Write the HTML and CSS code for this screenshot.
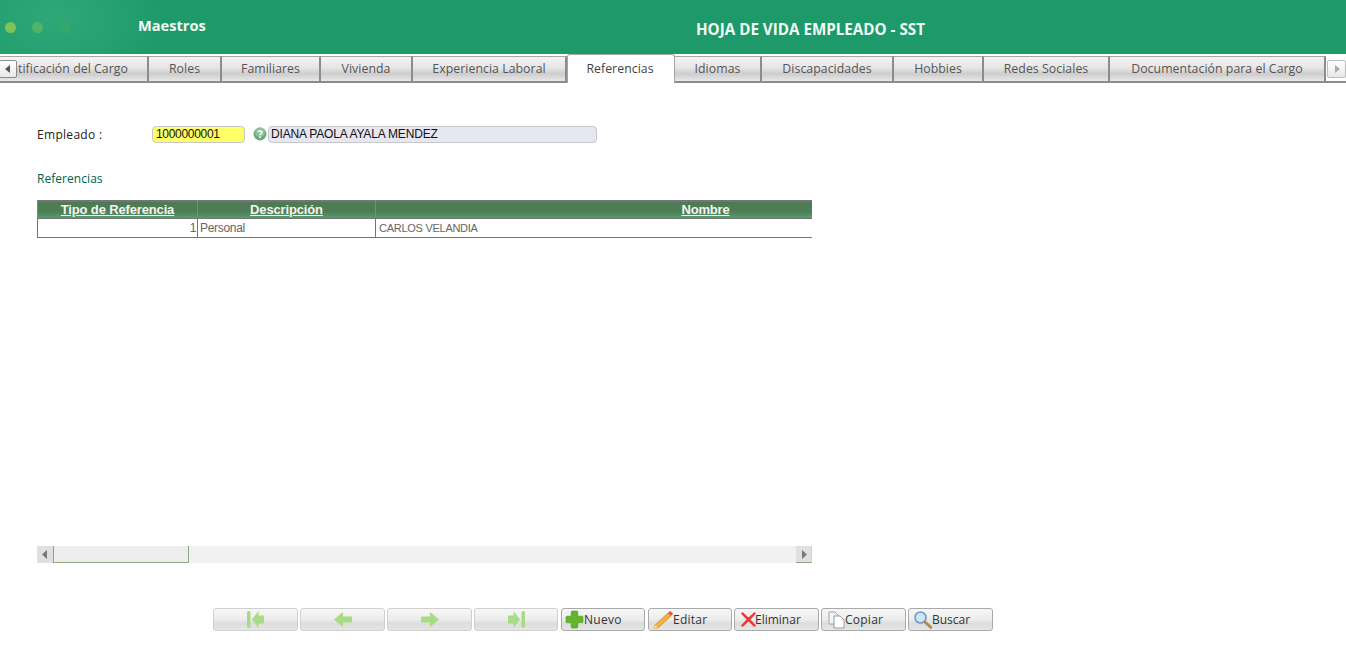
FILE: index.html
```html
<!DOCTYPE html>
<html lang="es">
<head>
<meta charset="utf-8">
<title>Hoja de vida empleado</title>
<link rel="stylesheet" href="styles.css">
</head>
<body>
<header class="topbar">
  <div class="brand">
    <span class="dots"><i class="dot d1"></i><i class="dot d2"></i><i class="dot d3"></i></span>
    <span class="brand-name">Maestros</span>
  </div>
  <h1 class="page-title">HOJA DE VIDA EMPLEADO - SST</h1>
</header>
<nav class="tabs">
  <button class="tab-scroll left"><svg width="6" height="8" viewBox="0 0 6 8"><path d="M5 0v8L0 4z" fill="#555"/></svg></button>
  <a class="tab first"><span>Identificación del Cargo</span></a>
  <a class="tab">Roles</a>
  <a class="tab">Familiares</a>
  <a class="tab">Vivienda</a>
  <a class="tab">Experiencia Laboral</a>
  <a class="tab active">Referencias</a>
  <a class="tab">Idiomas</a>
  <a class="tab">Discapacidades</a>
  <a class="tab">Hobbies</a>
  <a class="tab">Redes Sociales</a>
  <a class="tab">Documentación para el Cargo</a>
  <span class="tab-end"><button class="tab-scroll right"><svg width="6" height="8" viewBox="0 0 6 8"><path d="M1 0v8l5-4z" fill="#aaa"/></svg></button></span>
</nav>
<main class="content">
  <div class="field-row">
    <label class="field-label">Empleado :</label>
    <input class="code-input" value="1000000001">
    <svg class="help" width="14" height="14" viewBox="0 0 14 14"><circle cx="7" cy="7" r="6.5" fill="#6fa77f"/><circle cx="7" cy="5" r="5" fill="#a6cfae" opacity=".6"/><path d="M5 5.200C5 3.600 9 3.400 9 5.300 9 6.600 7 6.600 7 8.200" fill="none" stroke="#fff" stroke-width="1.500"/><rect x="6.200" y="9.300" width="1.600" height="1.600" fill="#fff"/></svg>
    <input class="name-input" value="DIANA PAOLA AYALA MENDEZ" readonly>
  </div>
  <h2 class="section-title">Referencias</h2>
  <div class="grid-wrap">
    <div class="grid-clip">
      <table class="grid">
        <thead>
          <tr><th class="c1">Tipo de Referencia</th><th class="c2">Descripción</th><th class="c3">Nombre</th></tr>
        </thead>
        <tbody>
          <tr><td class="num">1</td><td>Personal</td><td class="name">CARLOS VELANDIA</td></tr>
        </tbody>
      </table>
    </div>
    <div class="hscroll">
      <span class="hs-btn"><svg width="6" height="9" viewBox="0 0 6 9"><path d="M5 0v9L0 4.500z" fill="#777"/></svg></span>
      <span class="hs-thumb"></span>
      <span class="hs-track"></span>
      <span class="hs-btn end"><svg width="6" height="9" viewBox="0 0 6 9"><path d="M1 0v9l5-4.500z" fill="#777"/></svg></span>
    </div>
  </div>
  <div class="toolbar">
    <button class="btn"><svg width="17" height="17" viewBox="0 0 17 17"><rect x="0" y="0" width="3.500" height="17" rx="1.500" fill="#a5dc84"/><path d="M11.500 0v17L5 8.500z" fill="#a5dc84"/><rect x="10" y="4.500" width="7" height="8" rx="1" fill="#a5dc84"/></svg></button>
    <button class="btn"><svg width="18" height="15" viewBox="0 0 18 15"><path d="M0 7.500L9 0v4.500h8a1 1 0 0 1 1 1v4a1 1 0 0 1-1 1H9V15z" fill="#a5dc84"/></svg></button>
    <button class="btn"><svg width="18" height="15" viewBox="0 0 18 15"><path d="M18 7.500L9 0v4.500H1a1 1 0 0 0-1 1v4a1 1 0 0 0 1 1h8V15z" fill="#a5dc84"/></svg></button>
    <button class="btn narrow"><svg width="17" height="17" viewBox="0 0 17 17"><rect x="13.500" y="0" width="3.500" height="17" rx="1.500" fill="#a5dc84"/><path d="M5.500 0v17L12 8.500z" fill="#a5dc84"/><rect x="0" y="4.500" width="7" height="8" rx="1" fill="#a5dc84"/></svg></button>
    <button class="btn on narrow step"><svg width="19" height="19" viewBox="0 0 19 19"><path d="M7 1h5a.8.8 0 0 1 .8.800V6.200h4.400a.8.8 0 0 1 .8.800v5a.8.8 0 0 1-.8.800h-4.400v4.400a.8.8 0 0 1-.8.800H7a.8.8 0 0 1-.8-.800v-4.400H1.800A.8.8 0 0 1 1 12V7a.8.8 0 0 1 .8-.800h4.400V1.800A.8.8 0 0 1 7 1z" fill="#62b52c" stroke="#4f9a22" stroke-width=".6"/></svg><span>Nuevo</span></button>
    <button class="btn on narrow step"><svg width="21" height="20" viewBox="0 0 21 20"><path d="M16 3l3 3L6 18l-4 1 1-4z" fill="#f2b23e" stroke="#c98a2a" stroke-width=".7"/><path d="M16 3l1.500-1.500a1 1 0 0 1 1.400 0l1.600 1.600a1 1 0 0 1 0 1.400L19 6z" fill="#e2574c"/><path d="M2 19l1-4 3 3z" fill="#f5dcb5"/></svg><span>Editar</span></button>
    <button class="btn on wide-pad"><svg width="15" height="15" viewBox="0 0 15 15"><path d="M1.500 0L7.500 5.500 13.500 0 15 1.500 9.500 7.500 15 13.500 13.500 15 7.500 9.500 1.500 15 0 13.500 5.500 7.500 0 1.500z" fill="#e63a3a"/></svg><span class="tight">Eliminar</span></button>
    <button class="btn on wide-pad"><svg width="17" height="18" viewBox="0 0 17 18"><path d="M1 1h6l3 3v9H1z" fill="#f2f5f5" stroke="#9aa8aa"/><path d="M6 5h6l4 4v8H6z" fill="#fff" stroke="#8f9fa2"/></svg><span>Copiar</span></button>
    <button class="btn on mag"><svg width="19" height="20" viewBox="0 0 19 19"><circle cx="7.500" cy="7" r="5.500" fill="#cfe6f7" stroke="#6d9cc4" stroke-width="1.600"/><path d="M12 11.500l6 5.500" stroke="#b08a4c" stroke-width="3" stroke-linecap="round"/></svg><span class="buscar">Buscar</span></button>
  </div>
</main>
</body>
</html>
```
FILE: styles.css
```css
* { box-sizing: border-box; }
html, body { margin: 0; padding: 0; background: #fff; }
body { width: 1346px; height: 657px; overflow: hidden; font-family: "Open Sans", sans-serif; }

.topbar {
  height: 54px;
  display: flex;
  align-items: center;
  background: radial-gradient(ellipse 110px 70px at 55px 18px, #2fa878 0%, #1e9a6a 100%), #1e9a6a;
  background-color: #1e9a6a;
  color: #f2fbf6;
}
.brand { width: 552px; display: flex; align-items: center; flex: none; }
.dots { width: 138px; display: flex; gap: 16px; padding-left: 5px; flex: none; }
.dot { width: 11px; height: 11px; border-radius: 50%; display: block; }
.d1 { background: #7cc35c; }
.d2 { background: #53b366; }
.d3 { background: #35a76c; }
.brand-name { font-size: 14.600px; font-weight: 700; line-height: 20px; position: relative; top: -2px; }
.page-title { margin: 0 0 0 144px; font-size: 15.200px; font-weight: 700; line-height: 20px; position: relative; top: 2px; }

.tabs {
  position: relative;
  margin-top: 2px;
  height: 27px;
  display: grid;
  grid-template-columns: 149px 73px 99px 92px 154px 108px 87px 132px 90px 126px 216px 20px;
}
.tab {
  height: 27px;
  padding-bottom: 2px;
  display: flex;
  align-items: center;
  justify-content: center;
  font-size: 12.300px;
  letter-spacing: .05px;
  color: #555;
  border: solid #8c8c8c;
  border-width: 1px 2px 2px 0;
  border-top-color: #a6a6a6;
  background: linear-gradient(#f4f4f4 0%, #e6e6e6 45%, #cdcdcd 70%, #e8e8e8 100%);
  white-space: nowrap;
  overflow: hidden;
}
.tab.first { justify-content: flex-end; padding-right: 19px; }
.tab.active {
  height: 29px;
  margin-top: -2px;
  padding-right: 2px;
  padding-bottom: 2px;
  background: #fff;
  border: 1px solid #a6a6a6;
  border-bottom: 0;
  border-radius: 3px 3px 0 0;
  color: #444;
}
.tab-end { border-bottom: 2px solid #8c8c8c; height: 27px; background: #fff; display: block; }
.tab-scroll {
  position: absolute;
  top: 4px;
  width: 18px;
  height: 18px;
  padding: 0;
  display: flex;
  align-items: center;
  justify-content: center;
  background: linear-gradient(#fff, #e8e8e8);
  border: 1px solid #bdbdbd;
  border-radius: 2px;
}
.tab-scroll.left { left: -1px; border-color: #8c8c8c; }
.tab-scroll.right { left: 1327px; width: 19px; }

.content { padding-left: 37px; }
.field-row { display: flex; align-items: center; height: 18px; margin-top: 42px; }
.field-label { width: 115px; flex: none; font-size: 12px; letter-spacing: .3px; color: #222; }
.code-input, .name-input {
  height: 17px;
  padding: 0 2px;
  font-family: "Liberation Sans", Arial, sans-serif;
  font-size: 12px;
  color: #111;
  border: 1px solid #c8c8c8;
  border-radius: 4px;
  outline: 0;
}
.code-input { width: 93px; background: #ffff66; padding-left: 3px; letter-spacing: -.3px; }
.help { margin: 0 1px 0 8px; flex: none; }
.name-input { width: 329px; background: #e7e7f1; letter-spacing: -.17px; }
.section-title { margin: 27px 0 0; font-size: 12px; font-weight: 400; line-height: 18px; color: #005f48; height: 18px; letter-spacing: .05px; }

.grid-wrap { width: 775px; margin-top: 12px; }
.grid-clip { height: 346px; overflow: hidden; }
.grid {
  border-collapse: collapse;
  table-layout: fixed;
  width: 998px;
  font-family: "Liberation Sans", Arial, sans-serif;
}
.c1 { width: 160px; }
.c2 { width: 178px; }
.c3 { width: 660px; }
.grid th {
  height: 18px;
  padding: 0;
  font-size: 13px;
  line-height: 15px;
  letter-spacing: -.15px;
  font-weight: 700;
  color: #f2f7f2;
  text-decoration: underline;
  background: linear-gradient(#4d7a52 0%, #4e7d54 60%, #54a071 100%);
  border: 1px solid #757575;
  border-left-color: #6f9276;
  border-right-color: #6f9276;
}
.grid td {
  height: 19px;
  padding: 0 2px;
  font-size: 12px;
  line-height: 16px;
  letter-spacing: -.3px;
  color: #666;
  border: 1px solid #757575;
  overflow: hidden;
  white-space: nowrap;
}
.grid td.num { text-align: right; padding-right: 1px; }
.grid td.name { padding-left: 3px; font-size: 11px; letter-spacing: -.27px; }

.hscroll { height: 17px; display: flex; background: #eeeeee; }
.hs-btn { width: 16px; flex: none; height: 17px; background: #e0e0e0; display: flex; align-items: center; justify-content: center; }
.hs-btn.end { border-right: 1px solid #cfd6c4; border-bottom: 1px solid #8fa57c; }
.hs-thumb { width: 136px; flex: none; background: #eeeeee; border-left: 1px solid #8fa57c; border-right: 1px solid #8fa57c; border-bottom: 1px solid #8fa57c; }
.hs-track { flex: 1; background: #f1f1f1; }

.toolbar { display: flex; gap: 2px; margin-top: 45px; margin-left: 176px; }
.btn {
  width: 85px;
  flex: none;
  height: 23px;
  padding: 0;
  display: flex;
  align-items: center;
  justify-content: center;
  font-family: "Open Sans", sans-serif;
  font-size: 12px;
  letter-spacing: .25px;
  color: #333;
  background: linear-gradient(#f7f7f7 0%, #ececec 50%, #dcdcdc 70%, #e6e6e6 100%);
  border: 1px solid #cfcfcf;
  border-radius: 3px;
}
.btn.on { border-color: #a9a9a9; justify-content: flex-start; padding-left: 3px; }
.btn.narrow { width: 84px; }
.btn.step { margin-left: 1px; }
.btn.wide-pad { padding-left: 6px; }
.btn.mag { padding-left: 4px; }
.btn .tight { margin-left: -1px; letter-spacing: 0; }
.btn .buscar { letter-spacing: 0; }
```
